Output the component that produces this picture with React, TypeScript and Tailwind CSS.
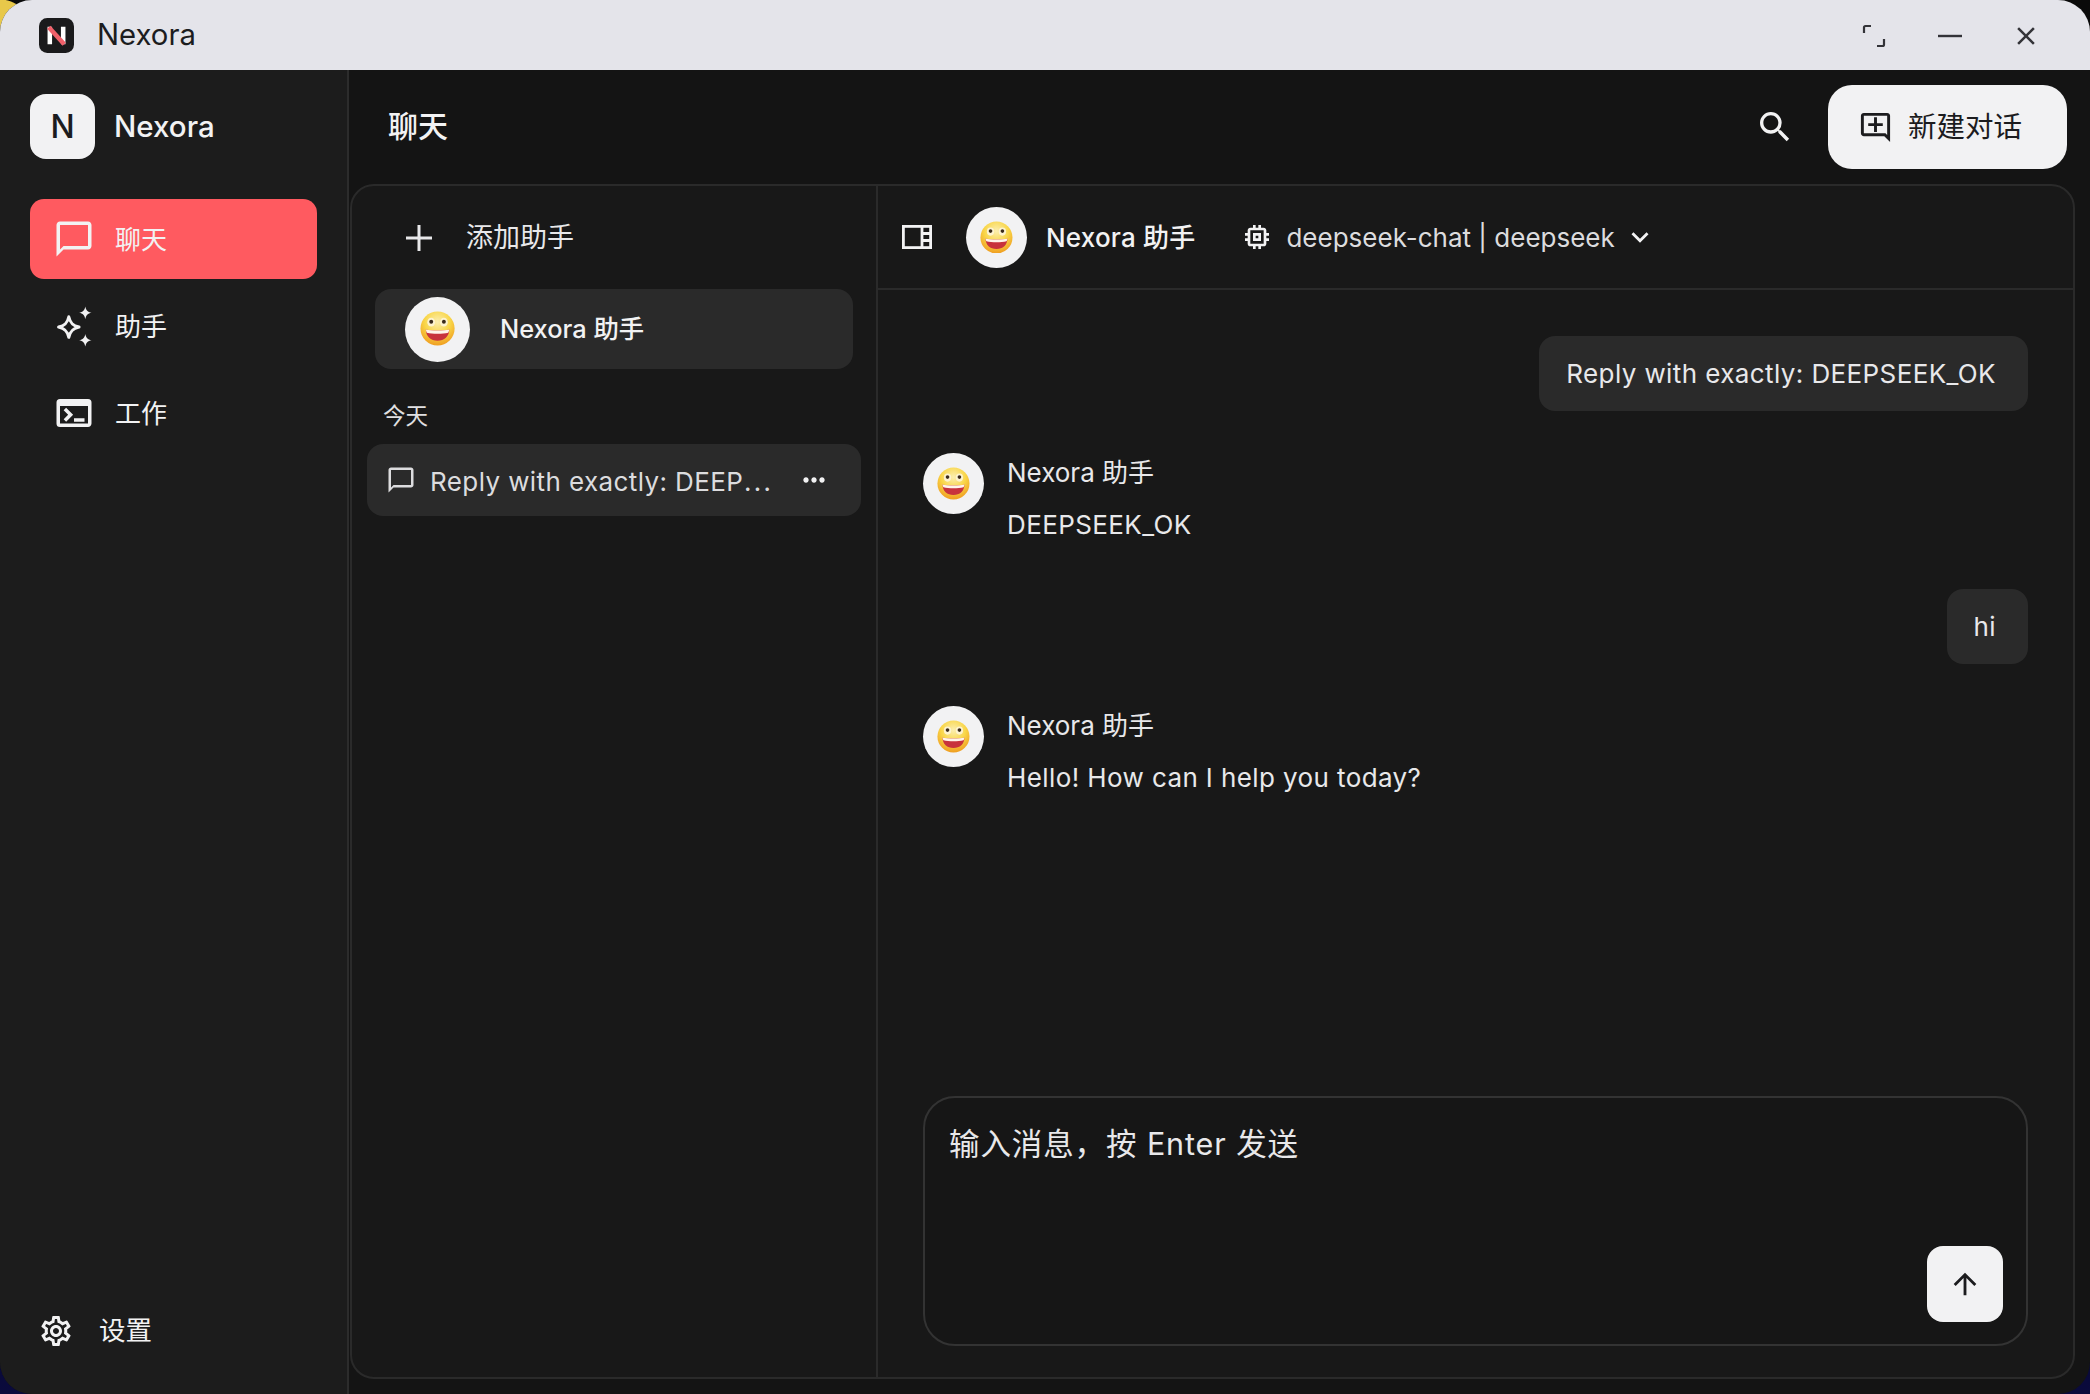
import { ReactNode } from "react";
import {
  MdArrowUpward,
  MdClose,
  MdKeyboardArrowDown,
  MdMoreHoriz,
  MdOutlineAddComment,
  MdOutlineChatBubbleOutline,
  MdOutlineMemory,
  MdOutlineSettings,
  MdSearch,
  MdTerminal,
} from "react-icons/md";

const FONT = "font-['Inter','Noto_Sans_CJK_SC',sans-serif]";

function Sparkles({ className }: { className?: string }) {
  return (
    <svg viewBox="0 0 36 36" className={className} fill="none">
      <path d="M13 9.5 C14.2 15 16.5 17.3 22 18.5 C16.5 19.7 14.2 22 13 27.5 C11.8 22 9.5 19.7 4 18.5 C9.5 17.3 11.8 15 13 9.5 Z" stroke="currentColor" strokeWidth="2.6" strokeLinejoin="round" />
      <path d="M27.5 0.5 C28.2 4 29.5 5.3 33 6 C29.5 6.7 28.2 8 27.5 11.5 C26.8 8 25.5 6.7 22 6 C25.5 5.3 26.8 4 27.5 0.5 Z" fill="currentColor" />
      <path d="M27.5 24.5 C28.2 28 29.5 29.3 33 30 C29.5 30.7 28.2 32 27.5 35.5 C26.8 32 25.5 30.7 22 30 C25.5 29.3 26.8 28 27.5 24.5 Z" fill="currentColor" />
    </svg>
  );
}

function AppLogo() {
  return (
    <svg viewBox="0 0 34 34" className="h-[35px] w-[35px]">
      <rect width="34" height="34" rx="8" fill="#1a1a1c" />
      <path d="M10.5 8.5 V25.5 M23.5 8.5 V25.5" stroke="#fff" strokeWidth="4.4" />
      <path d="M9.5 9 L24.5 25.5" stroke="#f0606a" strokeWidth="4.4" />
    </svg>
  );
}

function Avatar({ size }: { size: string }) {
  return (
    <div className={`flex shrink-0 items-center justify-center rounded-full bg-[#f2f2f3] ${size}`}>
      <svg viewBox="0 0 36 36" className="h-[54%] w-[54%]">
        <defs>
          <radialGradient id="face" cx="50%" cy="30%" r="75%">
            <stop offset="0%" stopColor="#fbeeb0" />
            <stop offset="50%" stopColor="#f9d648" />
            <stop offset="100%" stopColor="#ee951a" />
          </radialGradient>
        </defs>
        <circle cx="18" cy="18" r="17.5" fill="url(#face)" />
        <ellipse cx="11.5" cy="11.5" rx="4" ry="4.5" fill="#fdf3cf" />
        <ellipse cx="24.5" cy="11.5" rx="4" ry="4.5" fill="#fdf3cf" />
        <circle cx="11.5" cy="11" r="2" fill="#3a2a1c" />
        <circle cx="24.5" cy="11" r="2" fill="#3a2a1c" />
        <path d="M6 19 C12 20.5 24 20.5 30 19 C30 26 25 30.5 18 30.5 C11 30.5 6 26 6 19 Z" fill="#c8323c" />
        <path d="M6 19 C12 20.5 24 20.5 30 19 C29.8 20.4 29.5 21.4 29 22.2 C23 23.6 13 23.6 7 22.2 C6.5 21.4 6.2 20.4 6 19 Z" fill="#fff4ea" />
      </svg>
    </div>
  );
}

function NavItem({ icon, label, active }: { icon: ReactNode; label: string; active?: boolean }) {
  return (
    <div
      className={`flex h-[80px] items-center gap-[22px] rounded-[14px] pl-[25px] text-[26px] text-[#f2f2f3] ${
        active ? "bg-[#ff5a60]" : ""
      }`}
    >
      <span className="flex h-[36px] w-[38px] items-center justify-center">{icon}</span>
      {label}
    </div>
  );
}

function AssistantMessage({ text }: { text: string }) {
  return (
    <div className="flex gap-[23px]">
      <Avatar size="h-[61px] w-[61px]" />
      <div className="flex flex-col pt-[2px] text-[26px] leading-[36px] text-[#e8e8ea]">
        <span>Nexora 助手</span>
        <span className="mt-[16px] tracking-[0.4px]">{text}</span>
      </div>
    </div>
  );
}

function UserBubble({ text }: { text: string }) {
  return (
    <div className="flex justify-end">
      <div className="flex h-[75px] items-center rounded-[16px] bg-[#2a2a2a] pl-[27px] pr-[32px] text-[26px] tracking-[0.4px] text-[#e8e8ea]">
        {text}
      </div>
    </div>
  );
}

export default function App() {
  return (
    <div
      className={`h-[1394px] w-[2090px] overflow-hidden bg-[radial-gradient(circle_at_0_30px,#e8c84a_30px,transparent_31px),linear-gradient(180deg,#0a0a0a_0%,#0a0a14_60%,#0a0a3c_100%)] ${FONT}`}
    >
      <div className="relative flex h-full w-full flex-col overflow-hidden rounded-[32px] bg-[#141414]">
        {/* title bar */}
        <div className="flex h-[70px] shrink-0 items-center bg-[#e4e4ea] pl-[39px] pr-[52px] text-[#1c1c1e]">
          <AppLogo />
          <span className="ml-[23px] text-[29.3px]">Nexora</span>
          <div className="ml-auto flex items-center gap-[52px] pt-[2px]">
            <svg viewBox="0 0 24 24" className="h-[24px] w-[24px]" fill="none" stroke="#333338" strokeWidth="2.2">
              <path d="M2 9 V3.5 Q2 2 3.5 2 H9 M22 15 V20.5 Q22 22 20.5 22 H15" />
            </svg>
            <svg viewBox="0 0 24 24" className="h-[24px] w-[24px]" fill="none" stroke="#333338" strokeWidth="2.4">
              <path d="M0 12 H24" />
            </svg>
            <MdClose size={30} color="#333338" className="-mx-[3px]" />
          </div>
        </div>

        <div className="flex min-h-0 flex-1">
          {/* sidebar */}
          <aside className="flex w-[349px] shrink-0 flex-col border-r-2 border-[#2c2c2c] bg-[#1c1c1c] px-[30px]">
            <div className="mt-[24px] flex items-center gap-[19px]">
              <div className="flex h-[65px] w-[65px] items-center justify-center rounded-[16px] bg-[#f2f2f3] text-[32px] font-medium text-[#1c1c1e]">
                N
              </div>
              <span className="text-[29.5px] font-medium text-[#f2f2f3]">Nexora</span>
            </div>
            <nav className="mt-[40px] flex flex-col gap-[7px]">
              <NavItem active label="聊天" icon={<MdOutlineChatBubbleOutline size={42} className="shrink-0" />} />
              <NavItem label="助手" icon={<Sparkles className="h-[41px] w-[41px] shrink-0" />} />
              <NavItem label="工作" icon={<MdTerminal size={42} className="shrink-0" />} />
            </nav>
            <div className="mb-[43px] mt-auto flex h-[40px] items-center gap-[25px] pl-[8px] text-[26.5px] text-[#f2f2f3]">
              <MdOutlineSettings size={36} />
              设置
            </div>
          </aside>

          {/* main */}
          <main className="flex min-w-0 flex-1 flex-col pb-[15px] pl-[1px] pr-[15px]">
            <header className="flex h-[114px] shrink-0 items-center pl-[38px] pr-[8px]">
              <h1 className="pb-[2px] text-[30px] font-medium text-[#f2f2f3]">聊天</h1>
              <MdSearch size={40} color="#f2f2f3" className="ml-auto" />
              <button className="ml-[33px] flex h-[84px] w-[239px] items-center gap-[15px] rounded-[24px] bg-[#f2f2f3] pl-[30px] text-[28.5px] text-[#1c1c1e]">
                <MdOutlineAddComment size={35} />
                新建对话
              </button>
            </header>

            <div className="flex min-h-0 flex-1 overflow-hidden rounded-[24px] border-2 border-[#2a2a2a] bg-[#181818]">
              {/* assistants + conversations */}
              <section className="flex w-[526px] shrink-0 flex-col border-r-2 border-[#2a2a2a]">
                <div className="flex h-[103px] shrink-0 items-center gap-[34px] pl-[54px] text-[27px] text-[#e8e8ea]">
                  <svg viewBox="0 0 26 26" className="h-[26px] w-[26px]" stroke="currentColor" strokeWidth="3">
                    <path d="M13 0 V26 M0 13 H26" />
                  </svg>
                  <span className="pt-[2px]">添加助手</span>
                </div>
                <div className="mx-[23px] flex h-[80px] items-center gap-[30px] rounded-[16px] bg-[#2a2a2a] pl-[30px] text-[25.4px] font-medium text-[#f2f2f3]">
                  <Avatar size="h-[65px] w-[65px]" />
                  Nexora 助手
                </div>
                <div className="ml-[31px] mt-[29px] text-[22.5px] leading-[36px] text-[#e0e0e2]">今天</div>
                <div className="mx-[15px] mt-[10px] flex h-[72px] items-center rounded-[16px] bg-[#2a2a2a] pl-[19px] pr-[31px] text-[26px] tracking-[0.4px] text-[#dcdcde]">
                  <MdOutlineChatBubbleOutline size={30} className="shrink-0" />
                  <span className="ml-[14px] whitespace-nowrap">
                    Reply with exactly: DEEP<span className="font-['Noto_Sans_CJK_SC'] tracking-[-2px]">…</span>
                  </span>
                  <MdMoreHoriz size={32} color="#f2f2f3" className="ml-auto" />
                </div>
              </section>

              {/* chat */}
              <section className="flex min-w-0 flex-1 flex-col">
                <div className="flex h-[104px] shrink-0 items-center border-b-2 border-[#2a2a2a] pl-[24px] text-[#f2f2f3]">
                  <svg viewBox="0 0 30 24" className="h-[24px] w-[30px]" fill="none" stroke="currentColor" strokeWidth="2.8">
                    <rect x="1.4" y="1.4" width="27.2" height="21.2" />
                    <path d="M20 1 V23 M20 8.5 H29 M20 15.5 H29" />
                  </svg>
                  <Avatar size="ml-[34px] h-[61px] w-[61px]" />
                  <span className="ml-[19px] text-[26px] font-medium tracking-[0.2px]">Nexora 助手</span>
                  <MdOutlineMemory size={32} className="ml-[46px]" />
                  <span className="ml-[13px] text-[26px] text-[#dcdcde]">deepseek-chat | deepseek</span>
                  <MdKeyboardArrowDown size={34} className="ml-[8px]" />
                </div>

                <div className="flex flex-col pl-[45px] pr-[45px] pt-[46px]">
                  <UserBubble text="Reply with exactly: DEEPSEEK_OK" />
                  <div className="mt-[42px]">
                    <AssistantMessage text="DEEPSEEK_OK" />
                  </div>
                  <div className="mt-[46px]">
                    <UserBubble text="hi" />
                  </div>
                  <div className="mt-[42px]">
                    <AssistantMessage text="Hello! How can I help you today?" />
                  </div>
                </div>

                {/* composer */}
                <div className="relative mb-[31px] ml-[45px] mr-[45px] mt-auto h-[250px] rounded-[32px] border-2 border-[#333333] bg-[#161616] pl-[24px] pt-[26px] text-[30.5px] leading-[40px] tracking-[0.9px] text-[#e8e8ea]">
                  输入消息，按 Enter 发送
                  <button className="absolute bottom-[22px] right-[23px] flex h-[76px] w-[76px] items-center justify-center rounded-[16px] bg-[#f2f2f3] text-[#1c1c1e]">
                    <MdArrowUpward size={34} />
                  </button>
                </div>
              </section>
            </div>
          </main>
        </div>
      </div>
    </div>
  );
}
